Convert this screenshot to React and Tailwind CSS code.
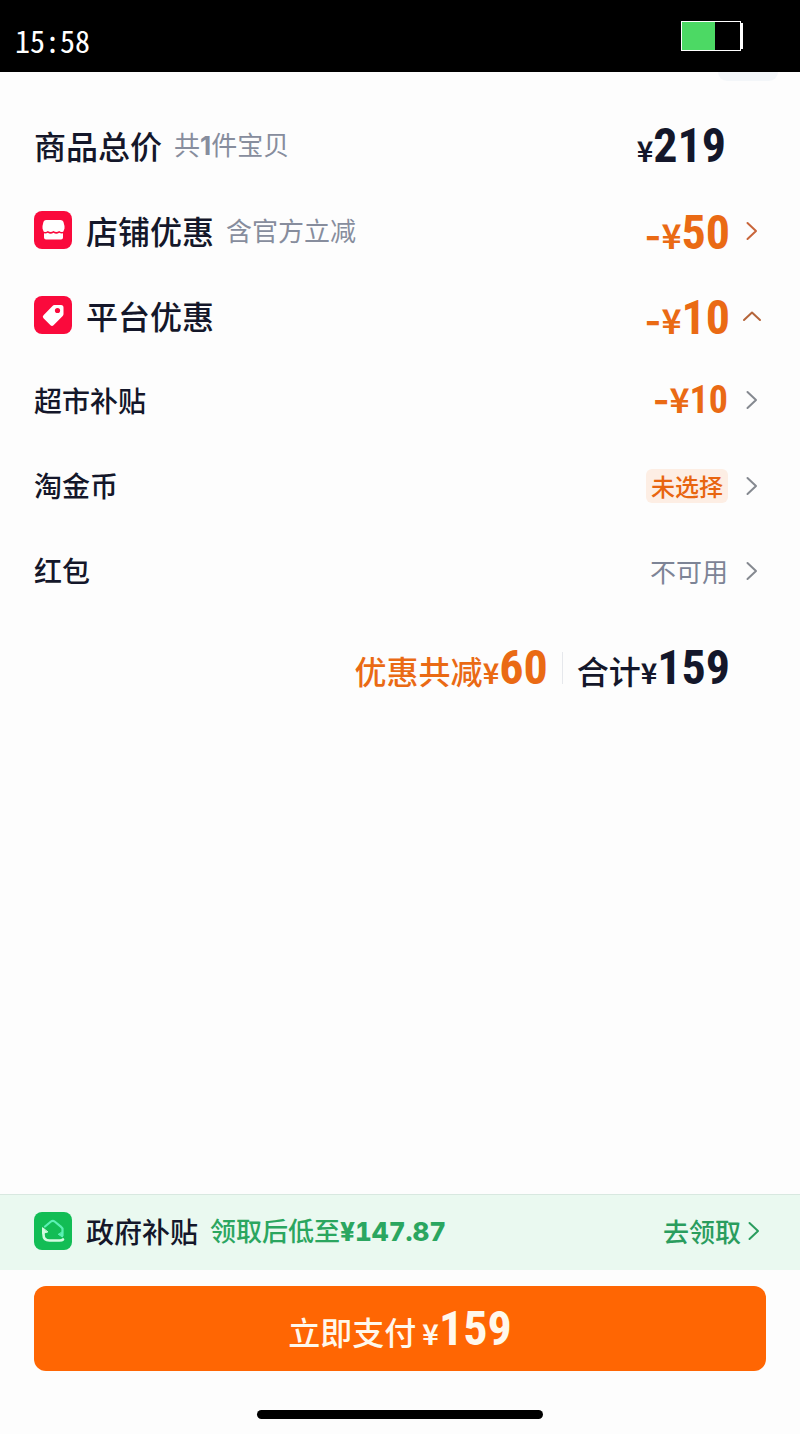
const INK = 'text-[#14172a]';
const ORANGE = 'text-[#ea6a14]';
const NUM = "font-['Roboto_Condensed','Liberation_Sans_Narrow','Roboto',sans-serif] font-bold";

function Chevron({ className = '', up }) {
    return (
        <svg viewBox="0 0 24 24" className={`size-6 shrink-0 ${className}`} fill="none" stroke="currentColor" strokeWidth="2" strokeLinecap="round" strokeLinejoin="round" aria-hidden="true">
            <path d={up ? 'M4 16l8-7.500 8 7.500' : 'M7.500 4l8.500 8-8.500 8'} />
        </svg>
    );
}

function Price({ amount, minus, size = 'text-5xl', sign = 'text-[28px]' }) {
    return (
        <span className="flex items-baseline leading-none">
            {minus && <span className="font-['Inter',sans-serif] text-[36px] font-bold">-</span>}
            <span className={`font-bold ${sign}`}>¥</span>
            <span className={`${NUM} ${size}`}>{amount}</span>
        </span>
    );
}

function ShopIcon() {
    return (
        <svg viewBox="0 0 38 38" className="size-[38px] shrink-0" aria-hidden="true">
            <rect width="38" height="38" rx="8" fill="#fa0a3c" />
            <path d="M12 9h14.500q2.200 0 2.900 1.800L30.500 15v2.500l-1.100 3q-2.300 1.200-4.200-.4-2.900 2-5.700 0-2.900 2-5.700 0-1.900 1.600-4.200.4L8.500 17.500V15l1-4.200Q10.200 9 12 9z" fill="#fff" />
            <path d="M10 22.300q2.200.3 3.800-.5 2.800 1.800 5.700 0 2.800 1.800 5.700 0 1.600.8 3.800.5v4.200q0 2-2 2H12q-2 0-2-2z" fill="#fff" />
        </svg>
    );
}

function TagIcon() {
    return (
        <svg viewBox="0 0 38 38" className="size-[38px] shrink-0" aria-hidden="true">
            <rect width="38" height="38" rx="8" fill="#fa0a3c" />
            <path d="M20.500 9h6.500q2.500 0 2.500 2.500V18q0 1.200-.8 2L19.500 29.200q-1.500 1.500-3 0l-7-7q-1.500-1.500 0-3L18.500 10q.8-1 2-1z" fill="#fff" />
            <circle cx="23.500" cy="14.500" r="2.600" fill="#fa0a3c" />
        </svg>
    );
}

function SubsidyIcon() {
    return (
        <svg viewBox="0 0 38 38" className="size-[38px] shrink-0" fill="none" strokeWidth="2.200" strokeLinejoin="round" strokeLinecap="round" aria-hidden="true">
            <rect width="38" height="38" rx="8" fill="#12bd55" />
            <path d="M11 14.500l6-5q1.800-1.400 3.600 0l5.900 4.800 2 2.200v7" stroke="#5cf0b4" />
            <path d="M24.500 22.500l4 2.500V20z" fill="#5cf0b4" stroke="#5cf0b4" strokeWidth="1" />
            <path d="M9.500 18v4.500q0 6 6 6h10q2.500 0 3.500-1" stroke="#d5fbe2" strokeWidth="2.600" />
            <path d="M8.500 16v5.500l5-1.500z" fill="#d5fbe2" stroke="#d5fbe2" strokeWidth="1" />
        </svg>
    );
}

function Row({ icon, label, note, big, children }) {
    return (
        <li className="flex h-[85px] items-center justify-between">
            <div className="flex items-center pb-[2px]">
                {icon && <span className="mr-[14px]">{icon}</span>}
                <span className={`${INK} font-medium ${big ? 'text-[32px]' : 'text-[28px]'}`}>{label}</span>
                {note && <span className="ml-3 pt-px text-[26px] text-[#878d9d]">{note}</span>}
            </div>
            {children}
        </li>
    );
}

export default function App() {
    return (
        <div className="flex min-h-screen flex-col bg-[#fdfdfd] font-['Noto_Sans_CJK_SC',sans-serif] leading-none">
            <header className="flex h-[72px] items-center justify-between bg-black pr-[57px] pl-[15px]">
                <time className="pt-2 font-['Noto_Sans_Mono_CJK_SC','DejaVu_Sans_Mono',monospace] text-[30px] text-white">15:58</time>
                <div className="flex items-center" role="img" aria-label="电量">
                    <div className="h-[30px] w-[60px] border border-white">
                        <div className="h-full w-[33px] bg-[#4cd964]" />
                    </div>
                    <div className="h-[26px] w-[2px] bg-white" />
                </div>
            </header>

            <main className="flex-1 pr-9 pl-[34px]">
                <div className="mr-[-14px] ml-auto h-[9px] w-[60px] rounded-b-xl bg-[#f3f6f9]" />
                <ul className="pt-[22px]">
                    <Row big label="商品总价" note={<>共<b className="font-['Inter',sans-serif]">1</b>件宝贝</>}>
                        <span className={`${INK} mr-[38px]`}><Price amount="219" /></span>
                    </Row>
                    <Row big icon={<ShopIcon />} label="店铺优惠" note="含官方立减">
                        <button type="button" aria-label="店铺优惠明细" className={`${ORANGE} flex items-center gap-[10px]`}>
                            <span className="pt-1"><Price minus amount="50" sign="text-[34px]" /></span>
                            <Chevron className="text-[#c8653a]" />
                        </button>
                    </Row>
                    <Row big icon={<TagIcon />} label="平台优惠">
                        <button type="button" aria-label="收起平台优惠" aria-expanded="true" className={`${ORANGE} flex items-center gap-[10px]`}>
                            <span className="pt-1"><Price minus amount="10" sign="text-[34px]" /></span>
                            <Chevron up className="text-[#b5653a]" />
                        </button>
                    </Row>
                    <Row label="超市补贴">
                        <button type="button" aria-label="超市补贴明细" className={`${ORANGE} flex items-center gap-3 pb-[2px]`}>
                            <Price minus amount="10" size="text-[38px]" sign="text-[34px]" />
                            <Chevron className="text-[#858990]" />
                        </button>
                    </Row>
                    <Row label="淘金币">
                        <button type="button" className="flex items-center gap-3">
                            <span className="rounded-md bg-[#fdeee4] px-[5px] py-[5px] text-[24px] font-medium text-[#e8650f]">未选择</span>
                            <Chevron className="text-[#858990]" />
                        </button>
                    </Row>
                    <Row label="红包">
                        <button type="button" className="flex items-center gap-3 text-[26px] text-[#7d8496]">
                            不可用
                            <Chevron className="text-[#858990]" />
                        </button>
                    </Row>
                </ul>
                <div className="mt-3 mr-[34px] flex h-[85px] items-center justify-end text-[32px] font-medium">
                    <p className={`${ORANGE} flex items-baseline`}>优惠共减<Price amount="60" /></p>
                    <span className="mx-[14px] h-8 w-px bg-[#e6e8ec]" />
                    <p className={`${INK} flex items-baseline`}>合计<Price amount="159" /></p>
                </div>
            </main>

            <footer>
                <div className="flex h-[76px] items-center border-t border-[#d8e8e0] bg-[#eaf9f0] px-[34px] pb-[3px]">
                    <SubsidyIcon />
                    <span className={`${INK} ml-[14px] text-[28px] font-medium`}>政府补贴</span>
                    <span className="ml-3 flex items-baseline text-[26px] font-medium text-[#2ba660]">
                        领取后低至<b className="font-['Inter',sans-serif] font-extrabold tabular-nums">¥147.87</b>
                    </span>
                    <a href="#claim" className="ml-auto flex items-center gap-[1px] text-[26px] font-medium text-[#2a9d5e]">
                        去领取
                        <Chevron />
                    </a>
                </div>
                <div className="px-[34px] pt-4">
                    <button type="button" className="flex h-[85px] w-full items-center justify-center rounded-xl bg-[#ff6603] text-[#fff8ec]">
                        <span className="flex items-baseline gap-[6px] text-[32px] font-medium">立即支付<Price amount="159" /></span>
                    </button>
                </div>
                <div className="mx-auto mt-[39px] mb-[15px] h-[9px] w-[286px] rounded-full bg-black" />
            </footer>
        </div>
    );
}
